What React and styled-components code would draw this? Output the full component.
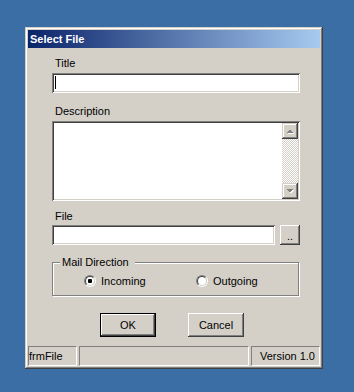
import styled, { createGlobalStyle, css } from "styled-components";

const GlobalStyle = createGlobalStyle`
  html, body {
    margin: 0;
    padding: 0;
  }
  body {
    background: #3a6ea5;
    font-family: "Liberation Sans", Arial, sans-serif;
    font-size: 11px;
    color: #000;
  }
  * {
    box-sizing: border-box;
  }
`;

const frameEdge = css`
  box-shadow: inset -1px -1px #404040, inset 1px 1px #d4d0c8,
    inset -2px -2px #808080, inset 2px 2px #ffffff;
`;

const buttonEdge = css`
  box-shadow: inset -1px -1px #404040, inset 1px 1px #ffffff,
    inset -2px -2px #808080, inset 2px 2px #d4d0c8;
`;

const sunkenEdge = css`
  box-shadow: inset 1px 1px #808080, inset -1px -1px #ffffff,
    inset 2px 2px #404040, inset -2px -2px #d4d0c8;
`;

const Desktop = styled.div`
  width: 354px;
  height: 392px;
  padding: 27px 0 0 25px;
`;

const Window = styled.div`
  width: 298px;
  height: 342px;
  padding: 3px;
  background: #d4d0c8;
  display: flex;
  flex-direction: column;
  ${frameEdge}
`;

const TitleBar = styled.div`
  height: 18px;
  display: flex;
  align-items: center;
  padding-left: 2px;
  background: linear-gradient(to right, #0a246a, #a6caf0);
  color: #fff;
  font-weight: bold;
  font-size: 11px;
`;

const Client = styled.div`
  flex: 1;
  display: flex;
  flex-direction: column;
`;

const Form = styled.div`
  display: flex;
  flex-direction: column;
  padding: 0 20px 0 24px;
`;

const Label = styled.div`
  line-height: 13px;
  padding-left: 3px;
  margin-top: ${(p) => p.$top}px;
`;

const TextBox = styled.div`
  height: ${(p) => p.$height || 20}px;
  width: ${(p) => (p.$width ? p.$width + "px" : "auto")};
  margin-top: ${(p) => p.$top || 0}px;
  background: #fff;
  padding: 3px 0 0 3px;
  ${sunkenEdge}
`;

const Caret = styled.span`
  display: block;
  width: 1px;
  height: 13px;
  background: #000;
`;

const MemoBox = styled.div`
  height: 80px;
  margin-top: 3px;
  background: #fff;
  padding: 2px;
  display: flex;
  justify-content: flex-end;
  ${sunkenEdge}
`;

const ScrollBar = styled.div`
  width: 16px;
  display: flex;
  flex-direction: column;
  background-image: repeating-conic-gradient(#ffffff 0 25%, #d4d0c8 0 50%);
  background-size: 2px 2px;
`;

const ScrollButton = styled.div`
  width: 16px;
  height: 16px;
  background: #d4d0c8;
  display: flex;
  ${frameEdge}
`;

const Track = styled.div`
  flex: 1;
`;

const FileRow = styled.div`
  display: flex;
  gap: 5px;
  margin-top: 2px;
`;

const SmallButton = styled.div`
  width: 20px;
  height: 20px;
  background: #d4d0c8;
  display: flex;
  align-items: center;
  justify-content: center;
  padding-top: 1px;
  ${buttonEdge}
`;

const Group = styled.div`
  position: relative;
  height: 34px;
  margin-top: 17px;
  width: 247px;
  border: 1px solid #808080;
  box-shadow: inset 1px 1px #ffffff, 1px 1px #ffffff;
  padding: 11px 0 0 31px;
`;

const Legend = styled.span`
  position: absolute;
  top: -7px;
  left: 7px;
  padding: 0 6px 0 2px;
  line-height: 13px;
  background: #d4d0c8;
`;

const RadioRow = styled.div`
  display: grid;
  grid-template-columns: 112px auto;
`;

const RadioOption = styled.label`
  display: flex;
  align-items: center;
  gap: 5px;
  height: 13px;
`;

const RadioOuter = styled.span`
  width: 12px;
  height: 12px;
  border-radius: 50%;
  border: 1px solid;
  border-color: #808080 #ffffff #ffffff #808080;
  display: flex;
`;

const RadioInner = styled.span`
  width: 10px;
  height: 10px;
  border-radius: 50%;
  border: 1px solid;
  border-color: #404040 #d4d0c8 #d4d0c8 #404040;
  background: #fff;
  display: flex;
  align-items: center;
  justify-content: center;
`;

const RadioDot = styled.span`
  width: 4px;
  height: 4px;
  border-radius: 1px;
  background: #000;
`;

const ButtonRow = styled.div`
  display: flex;
  gap: 32px;
  margin: 17px 0 0 48px;
`;

const PushButton = styled.div`
  width: 56px;
  height: 24px;
  display: flex;
  align-items: center;
  justify-content: center;
  background: #d4d0c8;
  border: ${(p) => (p.$default ? "1px solid #000" : "none")};
  ${buttonEdge}
`;

const StatusBar = styled.div`
  margin-top: auto;
  height: 20px;
  display: flex;
  gap: 2px;
`;

const Panel = styled.div`
  width: ${(p) => p.$width}px;
  border: 1px solid;
  border-color: #808080 #ffffff #ffffff #808080;
  display: flex;
  align-items: center;
  justify-content: ${(p) => (p.$right ? "flex-end" : "flex-start")};
  padding: ${(p) => (p.$right ? "0 4px 0 0" : "0 0 0 0")};
`;

function Arrow({ down }) {
  const up = "4,10 11,10 7.5,6.5";
  const dn = "4,6 11,6 7.5,9.5";
  return (
    <svg width="16" height="16" viewBox="0 0 16 16">
      <polygon
        points={down ? dn : up}
        fill="#ffffff"
        transform="translate(1,1)"
        shapeRendering="crispEdges"
      />
      <polygon points={down ? dn : up} fill="#808080" shapeRendering="crispEdges" />
    </svg>
  );
}

function Radio({ checked, children }) {
  return (
    <RadioOption>
      <RadioOuter>
        <RadioInner>{checked && <RadioDot />}</RadioInner>
      </RadioOuter>
      {children}
    </RadioOption>
  );
}

export default function App() {
  return (
    <Desktop>
      <GlobalStyle />
      <Window>
        <TitleBar>Select File</TitleBar>
        <Client>
          <Form>
            <Label $top={9}>Title</Label>
            <TextBox $top={3}>
              <Caret />
            </TextBox>

            <Label $top={12}>Description</Label>
            <MemoBox>
              <ScrollBar>
                <ScrollButton>
                  <Arrow />
                </ScrollButton>
                <Track />
                <ScrollButton>
                  <Arrow down />
                </ScrollButton>
              </ScrollBar>
            </MemoBox>

            <Label $top={9}>File</Label>
            <FileRow>
              <TextBox $width={223} />
              <SmallButton>..</SmallButton>
            </FileRow>

            <Group>
              <Legend>Mail Direction</Legend>
              <RadioRow>
                <Radio checked>Incoming</Radio>
                <Radio>Outgoing</Radio>
              </RadioRow>
            </Group>

            <ButtonRow>
              <PushButton $default>OK</PushButton>
              <PushButton>Cancel</PushButton>
            </ButtonRow>
          </Form>

          <StatusBar>
            <Panel $width={49}>frmFile</Panel>
            <Panel $width={170} />
            <Panel $width={69} $right>
              Version 1.0
            </Panel>
          </StatusBar>
        </Client>
      </Window>
    </Desktop>
  );
}
